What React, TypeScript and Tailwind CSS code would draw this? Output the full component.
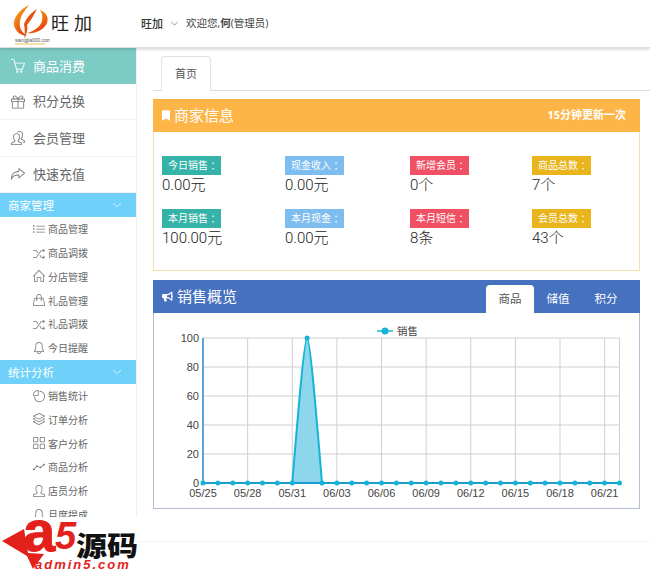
import {
  SlActionRedo, SlArrowDown, SlBasket, SlBell, SlGraph, SlGrid, SlHandbag, SlHome, SlLayers, SlList,
  SlPeople, SlPieChart, SlPresent, SlShuffle, SlUser,
} from "react-icons/sl";
import { FaBookmark, FaBullhorn } from "react-icons/fa";

const mainMenu = [
  { label: "积分兑换", icon: SlPresent },
  { label: "会员管理", icon: SlPeople },
  { label: "快速充值", icon: SlActionRedo },
];

const shopMenu = [
  { label: "商品管理", icon: SlList },
  { label: "商品调拨", icon: SlShuffle },
  { label: "分店管理", icon: SlHome },
  { label: "礼品管理", icon: SlHandbag },
  { label: "礼品调拨", icon: SlShuffle },
  { label: "今日提醒", icon: SlBell },
];

const statMenu = [
  { label: "销售统计", icon: SlPieChart },
  { label: "订单分析", icon: SlLayers },
  { label: "客户分析", icon: SlGrid },
  { label: "商品分析", icon: SlGraph },
  { label: "店员分析", icon: SlUser },
  { label: "月度提成", icon: SlBell },
];

const stats = [
  { label: "今日销售", value: "0.00元", color: "bg-[#36b3a8]" },
  { label: "现金收入", value: "0.00元", color: "bg-[#7dbdf0]" },
  { label: "新增会员", value: "0个", color: "bg-[#ef5063]" },
  { label: "商品总数", value: "7个", color: "bg-[#e9b41c]" },
  { label: "本月销售", value: "100.00元", color: "bg-[#36b3a8]" },
  { label: "本月现金", value: "0.00元", color: "bg-[#7dbdf0]" },
  { label: "本月短信", value: "8条", color: "bg-[#ef5063]" },
  { label: "会员总数", value: "43个", color: "bg-[#e9b41c]" },
];

function SubMenu({ items }: { items: typeof shopMenu }) {
  return (
    <ul>
      {items.map((item) => (
        <li key={item.label} className="flex h-[23.8px] items-center pl-[33px] text-[10px] text-[#666]">
          <item.icon className="mr-[3px] h-3 w-3 shrink-0 text-[#777]" />
          <span className="pt-[2px]">{item.label}</span>
        </li>
      ))}
    </ul>
  );
}

function MenuHeader({ label }: { label: string }) {
  return (
    <div className="flex h-[24px] items-center justify-between bg-[#6fd0fa] pl-2 pr-[15px] text-[11.5px] text-white">
      <span className="pt-[2px]">{label}</span>
      <SlArrowDown className="h-2 w-2" />
    </div>
  );
}

function Logo() {
  return (
    <svg width="38" height="44" viewBox="10 0 38 44" className="shrink-0">
      <defs>
        <linearGradient id="swirl" x1="0" y1="0" x2="0.6" y2="1">
          <stop offset="0" stopColor="#f9b81a" />
          <stop offset="1" stopColor="#e63d0e" />
        </linearGradient>
      </defs>
      <path d="M27 3C17 8 11 16 12 23C13 29 18 33 25 34C19 30 17 25 18 19C19 13 23 8 27 3Z" fill="url(#swirl)" />
      <path d="M38 8C44 10 47 15 45 21C42 28 33 32 25 31C32 29 38 25 40 19C41 15 40 11 38 8Z" fill="url(#swirl)" />
      <path d="M35 7C30 10 25 15 22 22C23 27 23 32 22 37C25 31 26 27 25 23C29 18 32 13 35 7Z" fill="#e8520f" />
      <text x="13" y="40" fontSize="5" fill="#555" fontFamily="Liberation Sans">wangjia000.com</text>
      <path d="M13 42h30" stroke="#e9c04c" strokeWidth="1" />
    </svg>
  );
}

function A5Logo() {
  return (
    <div className="absolute bottom-0 left-0 h-[54px] w-[138px] bg-white">
      <svg width="50" height="54" viewBox="0 0 50 54" className="absolute left-0 top-0">
        <path d="M2 24L24 12L28 36L44 37L33 52L27 39Z" fill="#e3211c" />
      </svg>
      <span className="absolute left-[23px] top-[-15px] font-['Liberation_Sans',sans-serif] text-[58px] leading-none font-bold text-[#e3211c] [-webkit-text-stroke:1px_#e3211c]">
        a
      </span>
      <span className="absolute left-[55px] top-0 font-['Liberation_Sans',sans-serif] text-[38px] leading-none font-bold italic text-[#e3211c]">
        5
      </span>
      <span className="absolute left-[76px] top-[15px] origin-left scale-x-[1.15] font-['Noto_Sans_CJK_SC',sans-serif] text-[27px] leading-[25px] font-black text-[#111]">
        源码
      </span>
      <span className="absolute left-[35px] top-[41px] font-['Liberation_Sans',sans-serif] text-[13px] leading-none font-bold tracking-[2px] text-[#e3211c] italic">
        admin5.com
      </span>
    </div>
  );
}

function SalesChart() {
  const left = 203;
  const right = 619.5;
  const top = 338;
  const bottom = 483;
  const step = (right - left) / 28;
  const vLines = [0, 3, 6, 9, 12, 15, 18, 21, 24, 27];
  const dates = ["05/25", "05/28", "05/31", "06/03", "06/06", "06/09", "06/12", "06/15", "06/18", "06/21"];
  const yVals = [0, 20, 40, 60, 80, 100];
  const points = Array.from({ length: 29 }, (_, i) => i);
  const px = (i: number) => left + i * step;
  const yy = (v: number) => bottom - (v / 100) * (bottom - top);
  const peak = `M${px(6)} ${bottom}C${px(6) + 5} ${bottom - 60} ${px(7) - 3} ${top} ${px(7)} ${top}C${px(7) + 3} ${top} ${px(8) - 5} ${bottom - 60} ${px(8)} ${bottom}`;

  return (
    <svg width="485" height="195" viewBox="154 313 485 195" className="block">
      <g stroke="#cfcfd3" strokeWidth="1">
        {yVals.map((v) => (
          <line key={v} x1={left} x2={right} y1={yy(v)} y2={yy(v)} />
        ))}
        {vLines.map((d) => (
          <line key={d} x1={px(d)} x2={px(d)} y1={top} y2={bottom} />
        ))}
        <line x1={right} x2={right} y1={top} y2={bottom} />
      </g>
      <line x1={left} x2={left} y1={top} y2={bottom} stroke="#2a8fd0" strokeWidth="1.5" />
      <path d={`${peak}Z`} fill="#8dd6ec" />
      <line x1={left} x2={right} y1={bottom} y2={bottom} stroke="#1a9cd4" strokeWidth="2" />
      <path d={peak} fill="none" stroke="#15b4d6" strokeWidth="2" />
      {points.map((i) => (
        <circle key={i} cx={px(i)} cy={i === 7 ? top : bottom} r="2.5" fill="#15b4d6" />
      ))}
      <g fontFamily="Liberation Sans" fontSize="11" fill="#444">
        {yVals.map((v) => (
          <text key={v} x="199" y={yy(v) + 4} textAnchor="end">
            {v}
          </text>
        ))}
        {dates.map((d, i) => (
          <text key={d} x={px(vLines[i])} y="497" textAnchor="middle">
            {d}
          </text>
        ))}
      </g>
      <line x1="377" x2="393" y1="331" y2="331" stroke="#15b4d6" strokeWidth="1.5" />
      <circle cx="385" cy="331" r="3.5" fill="#15b4d6" />
      <text x="397" y="335" fontSize="10.5" fill="#444" fontFamily="Noto Sans CJK SC">
        销售
      </text>
    </svg>
  );
}

export default function App() {
  return (
    <div className="relative h-[571px] w-[650px] overflow-hidden bg-white font-['Open_Sans','Noto_Sans_CJK_SC',sans-serif]">
      <header className="relative z-10 flex h-[48px] items-center border-b border-[#ddd] bg-white shadow-[0_1px_3px_rgba(0,0,0,0.2)]">
        <div className="flex w-[141px] items-center pl-[12px]">
          <Logo />
          <span className="ml-[1px] text-[18px] tracking-[5px] text-[#222]">旺加</span>
        </div>
        <span className="pt-[1px] text-[11px] font-medium text-[#333]">旺加</span>
        <SlArrowDown className="ml-[8px] h-[7px] w-[7px] text-[#555]" />
        <span className="ml-[8px] pt-[1px] text-[10.5px] text-[#444]">
          欢迎您,<b>何</b>(管理员)
        </span>
      </header>

      <div className="flex h-[523px]">
        <aside className="w-[137px] shrink-0 overflow-hidden border-r border-[#eee]">
          <div className="flex h-[36px] items-center bg-[#7ccbc5] pl-[11px] text-[13px] text-white">
            <SlBasket className="mr-[8px] h-[14px] w-[14px]" />
            <span className="pt-[1px]">商品消费</span>
          </div>
          {mainMenu.map((item) => (
            <div key={item.label} className="flex h-[36.3px] items-center border-b border-[#f2f2f2] pl-[11px] text-[13px] text-[#666]">
              <item.icon className="mr-[8px] h-[14px] w-[14px] text-[#777]" />
              <span className="pt-[1px]">{item.label}</span>
            </div>
          ))}
          <MenuHeader label="商家管理" />
          <SubMenu items={shopMenu} />
          <MenuHeader label="统计分析" />
          <SubMenu items={statMenu} />
        </aside>

        <main className="w-[513px] pl-[16px] pr-[10px]">
          <div className="-mr-[10px] flex h-[43px] items-end border-b border-[#ddd] pl-[8px]">
            <div className="relative top-px flex h-[35px] w-[50px] items-center justify-center rounded-t-[4px] border border-b-0 border-[#e3e3e3] bg-white text-[11px] text-[#555]">
              首页
            </div>
          </div>

          <section className="mt-[8px] h-[172px] border border-[#f5dfae]">
            <div className="-mx-px -mt-px flex h-[33px] items-center justify-between bg-[#fdb548] pl-[9px] pr-[14px] text-white">
              <span className="flex items-center text-[15px]">
                <FaBookmark className="mr-[4px] h-[11px] w-[8px]" />
                商家信息
              </span>
              <span className="text-[11px] font-bold">15分钟更新一次</span>
            </div>
            <div className="grid grid-cols-[123px_125px_122px_1fr] gap-y-[14px] pl-[8px] pt-[24px]">
              {stats.map((s) => (
                <div key={s.label} className="h-[39px]">
                  <div className={`flex h-[19px] w-[59px] items-center pl-[6px] text-[10px] whitespace-nowrap text-white ${s.color}`}>
                    {s.label}
                    <span className="font-['Noto_Sans_CJK_TC',sans-serif]">：</span>
                  </div>
                  <div className="font-['Roboto','Noto_Sans_CJK_SC',sans-serif] text-[15px] leading-[20px] font-light text-[#222]">{s.value}</div>
                </div>
              ))}
            </div>
          </section>

          <section className="mt-[9px] h-[229px] border border-[#b6bed3]">
            <div className="-mx-px -mt-px flex h-[33px] items-end justify-between bg-[#4571bf] pl-[9px] pr-[10px] text-white">
              <span className="mb-[2px] flex h-[30px] items-center text-[15px]">
                <FaBullhorn className="mr-[4px] h-[11px] w-[11px]" />
                销售概览
              </span>
              <div className="flex text-[11.5px]">
                <span className="flex h-[28px] w-[48px] items-center justify-center rounded-t-[4px] bg-white text-[#555]">商品</span>
                <span className="flex h-[28px] w-[48px] items-center justify-center">储值</span>
                <span className="flex h-[28px] w-[48px] items-center justify-center">积分</span>
              </div>
            </div>
            <SalesChart />
          </section>

          <div className="-ml-[16px] -mr-[10px] mt-[32px] border-t border-[#f3f3f3]" />
        </main>
      </div>

      <A5Logo />
    </div>
  );
}
